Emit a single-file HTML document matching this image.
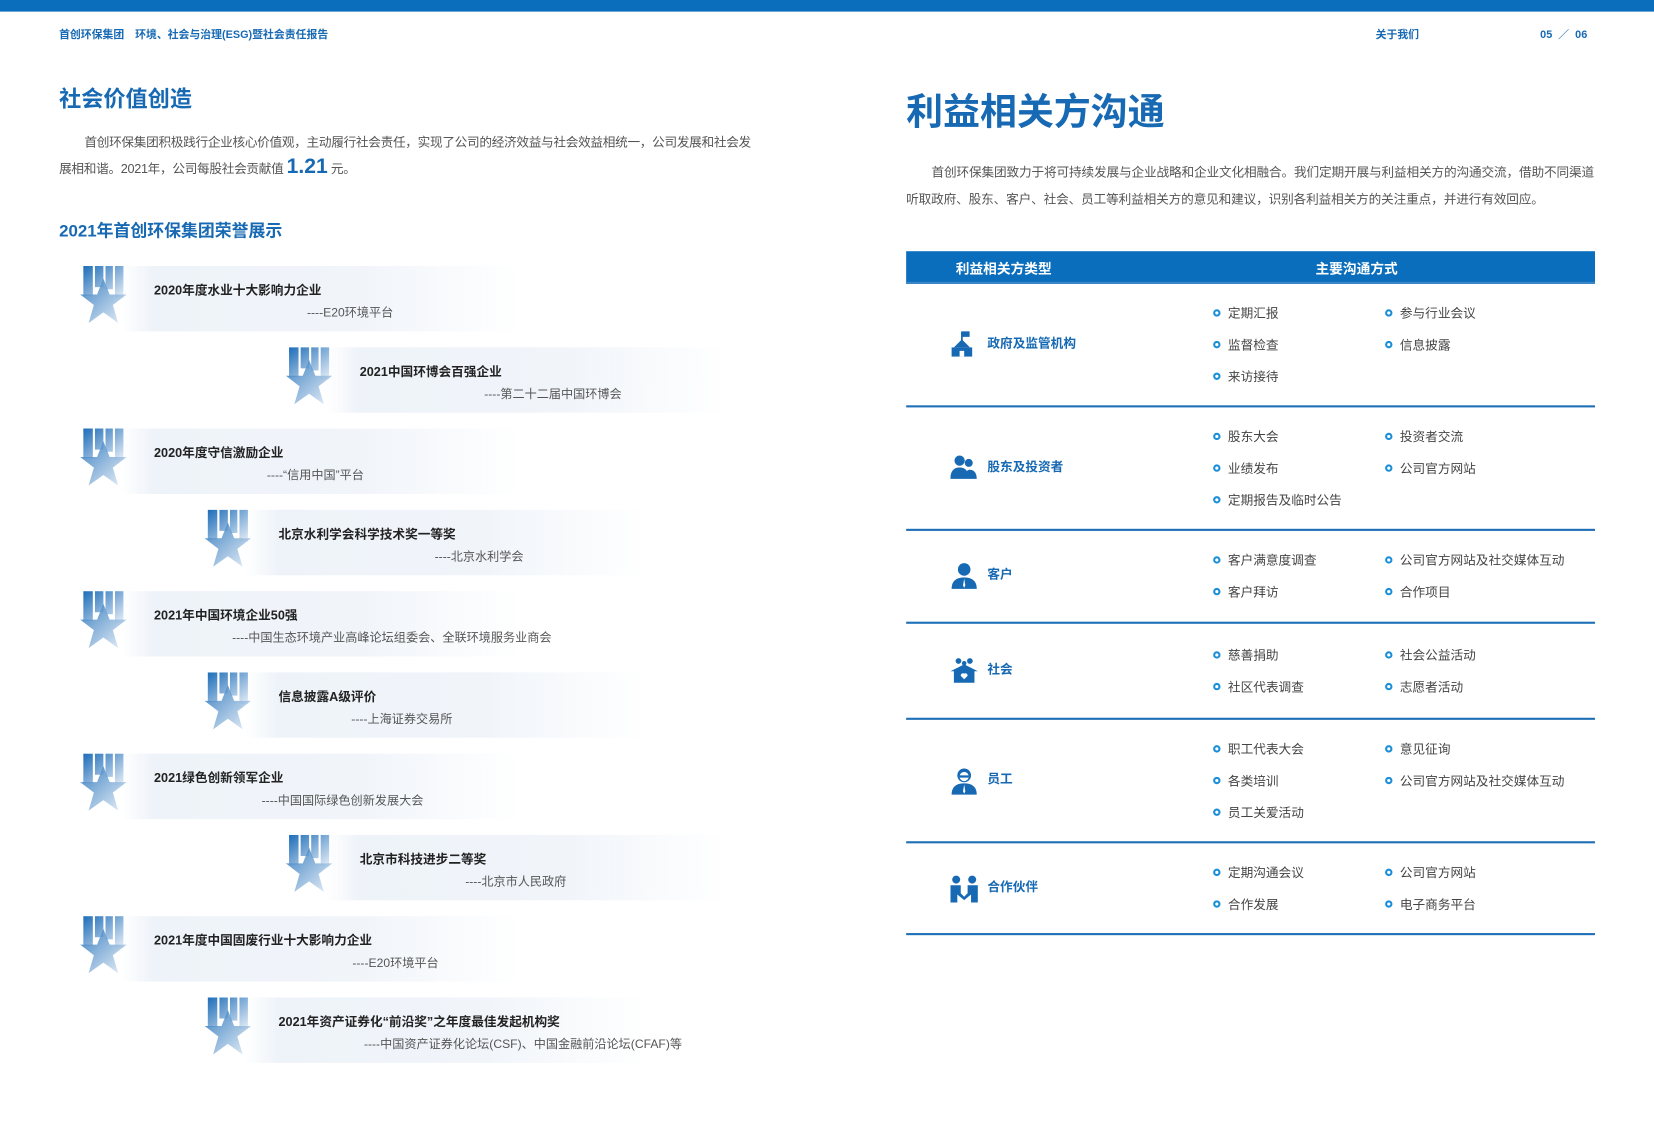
<!DOCTYPE html>
<html><head><meta charset="utf-8"><style>
*{margin:0;padding:0;box-sizing:border-box}
html,body{width:1654px;height:1122px;overflow:hidden;background:#fff}
#w{position:absolute;left:0;top:0;width:1568px;height:1063px;transform:scale(1.0549,1.0555);transform-origin:0 0;font-family:"Liberation Sans","Noto Sans CJK SC",sans-serif;color:#444}
.a{position:absolute;white-space:nowrap}
.b{color:#1769b3;font-weight:bold}
.ban{position:absolute;height:62px;width:380px;background:linear-gradient(90deg,rgba(220,230,240,.0) 0%,#eef3f9 8%,#f1f5fa 60%,rgba(255,255,255,0) 100%)}
.t{font-size:12px;font-weight:bold;color:#222}
.s{font-size:11.5px;color:#555}
.bl{position:absolute;width:7px;height:7px;border:2px solid #1a8fd8;border-radius:50%}
.it{font-size:12px;color:#444}
.ln{position:absolute;left:859px;width:653px;height:2px;background:#1e6fb5}
.lb{font-size:12px;font-weight:bold;color:#1769b3}
</style></head><body><div id="w">
<div class="a" style="left:0;top:0;width:1568px;height:11px;background:#0a6ebd"></div>
<div class="a b" style="left:56px;top:24px;font-size:10.3px">首创环保集团　环境、社会与治理(ESG)暨社会责任报告</div>
<div class="a b" style="left:1304px;top:24px;font-size:10.3px">关于我们</div>
<div class="a b" style="left:1460px;top:24px;font-size:10.3px">05 &nbsp;／&nbsp; 06</div>

<div class="a b" style="left:56px;top:78px;font-size:21px">社会价值创造</div>
<div class="a" style="left:80px;top:126px;font-size:12px;color:#555;letter-spacing:-0.3px">首创环保集团积极践行企业核心价值观，主动履行社会责任，实现了公司的经济效益与社会效益相统一，公司发展和社会发</div>
<div class="a" style="left:56px;top:147px;font-size:12px;color:#555;letter-spacing:-0.3px">展相和谐。2021年，公司每股社会贡献值 <span style="font-size:20px;font-weight:bold;color:#1769b3;letter-spacing:0">1.21</span> 元。</div>
<div class="a b" style="left:56px;top:205px;font-size:16px">2021年首创环保集团荣誉展示</div>

<div id="aw"></div>

<div class="a b" style="left:859px;top:78px;font-size:35px">利益相关方沟通</div>
<div class="a" style="left:883px;top:154px;font-size:12px;color:#555;letter-spacing:-0.15px">首创环保集团致力于将可持续发展与企业战略和企业文化相融合。我们定期开展与利益相关方的沟通交流，借助不同渠道</div>
<div class="a" style="left:859px;top:180px;font-size:12px;color:#555;letter-spacing:-0.15px">听取政府、股东、客户、社会、员工等利益相关方的意见和建议，识别各利益相关方的关注重点，并进行有效回应。</div>

<div class="a" style="left:859px;top:238px;width:653px;height:31px;background:#0a6ebd;border-bottom:2px solid #3a86c6"></div>
<div class="a" style="left:906px;top:244px;font-size:13px;font-weight:bold;color:#fff">利益相关方类型</div>
<div class="a" style="left:1247px;top:244px;font-size:13px;font-weight:bold;color:#fff">主要沟通方式</div>
<div id="tb"></div>
</div>
<script>
var aw=[[75,"2020年度水业十大影响力企业",291,"----E20环境平台"],[270,"2021中国环博会百强企业",459,"----第二十二届中国环博会"],[75,"2020年度守信激励企业",253,"----“信用中国”平台"],[193,"北京水利学会科学技术奖一等奖",412,"----北京水利学会"],[75,"2021年中国环境企业50强",220,"----中国生态环境产业高峰论坛组委会、全联环境服务业商会"],[193,"信息披露A级评价",333,"----上海证券交易所"],[75,"2021绿色创新领军企业",248,"----中国国际绿色创新发展大会"],[270,"北京市科技进步二等奖",441,"----北京市人民政府"],[75,"2021年度中国固废行业十大影响力企业",334,"----E20环境平台"],[193,"2021年资产证券化“前沿奖”之年度最佳发起机构奖",345,"----中国资产证券化论坛(CSF)、中国金融前沿论坛(CFAF)等"]];
var h="";
aw.forEach(function(r,i){var y=252+i*77,x=r[0];
h+='<div class="ban" style="left:'+(x+40)+'px;top:'+y+'px"></div>';
h+='<svg class="a" style="left:'+x+'px;top:'+y+'px" width="46" height="55" viewBox="0 0 46 55"><defs><linearGradient id="g'+i+'" x1="0" y1="0" x2="1" y2="1"><stop offset="0" stop-color="#1d6db8"/><stop offset="1" stop-color="#e6eef7"/></linearGradient></defs><path d="M4 0h9v28h-9zM15 0h8v20h-8zM25 0h7v22h-7zM34 0h8v30h-8z" fill="url(#g'+i+')"/><path d="M23 12l6 15h16l-13 10 5 17-14-10-14 10 5-17-13-10h16z" fill="url(#g'+i+')" opacity=".85"/></svg>';
h+='<div class="a t" style="left:'+(x+71)+'px;top:'+(y+14)+'px">'+r[1]+'</div>';
h+='<div class="a s" style="left:'+r[2]+'px;top:'+(y+36)+'px">'+r[3]+'</div>';});
document.getElementById("aw").outerHTML=h;
var ic={
gov:'<path d="M10 0v8M10 0h6v4h-6" stroke="#1769b3" stroke-width="1.5" fill="#1769b3"/><path d="M10 7l7 7h-14z" fill="#1769b3"/><rect x="1" y="14" width="18" height="8" fill="#1769b3"/><rect x="8" y="17" width="4" height="5" fill="#fff"/>',
sh:'<circle cx="8" cy="5" r="4.5" fill="#1769b3"/><circle cx="16" cy="7" r="3.5" fill="#1769b3"/><path d="M0 21c0-7 3-10 8-10s8 3 8 10zM13 21c0-5 1-8 4-8s6 2 6 8z" fill="#1769b3"/>',
cu:'<circle cx="12" cy="6" r="5.5" fill="#1769b3"/><path d="M1 23c0-7 4-10 11-10s11 3 11 10z" fill="#1769b3"/><path d="M12 14l1 6-1 2-1-2z" fill="#fff"/>',
so:'<circle cx="7" cy="3" r="2.5" fill="#1769b3"/><circle cx="17" cy="3" r="2.5" fill="#1769b3"/><circle cx="12" cy="5" r="2" fill="#1769b3"/><path d="M0 12l12-6 12 6h-3v10h-18v-10z" fill="#1769b3"/><path d="M12 19l-3-3a2 2 0 013-2 2 2 0 013 2z" fill="#fff"/>',
em:'<circle cx="12" cy="7" r="6" fill="#1769b3"/><circle cx="12" cy="8" r="4" fill="#fff"/><rect x="8" y="7" width="8" height="2" fill="#1769b3"/><path d="M1 24c0-7 4-10 11-10s11 3 11 10z" fill="#1769b3"/><path d="M12 15l1 6-1 2-1-2z" fill="#fff"/>',
pa:'<circle cx="5" cy="4" r="3.5" fill="#1769b3"/><circle cx="19" cy="4" r="3.5" fill="#1769b3"/><path d="M0 9h9v7l3 3 3-3v-7h9v15h-6v-7l-6 5-6-5v7h-6z" fill="#1769b3"/>'};
var rows=[[269,385,"gov","政府及监管机构",[["定期汇报","参与行业会议"],["监督检查","信息披露"],["来访接待",""]]],
[385,502,"sh","股东及投资者",[["股东大会","投资者交流"],["业绩发布","公司官方网站"],["定期报告及临时公告",""]]],
[502,590,"cu","客户",[["客户满意度调查","公司官方网站及社交媒体互动"],["客户拜访","合作项目"]]],
[590,681,"so","社会",[["慈善捐助","社会公益活动"],["社区代表调查","志愿者活动"]]],
[681,798,"em","员工",[["职工代表大会","意见征询"],["各类培训","公司官方网站及社交媒体互动"],["员工关爱活动",""]]],
[798,885,"pa","合作伙伴",[["定期沟通会议","公司官方网站"],["合作发展","电子商务平台"]]]];
h="";
rows.forEach(function(r){var m=(r[0]+r[1])/2,n=r[4].length,y0=m-(n-1)*15-1;
h+='<svg class="a" style="left:901px;top:'+(m-13)+'px" width="26" height="26" viewBox="0 0 24 24">'+ic[r[2]]+'</svg>';
h+='<div class="a lb" style="left:936px;top:'+(m-11)+'px">'+r[3]+'</div>';
r[4].forEach(function(p,k){var y=y0+k*30;
[[1150,p[0]],[1313,p[1]]].forEach(function(c){if(!c[1])return;
h+='<div class="bl" style="left:'+c[0]+'px;top:'+(y-3)+'px"></div><div class="a it" style="left:'+(c[0]+14)+'px;top:'+(y-8)+'px">'+c[1]+'</div>';});});
h+='<div class="ln" style="top:'+(r[1]-1)+'px"></div>';});
document.getElementById("tb").outerHTML=h;
</script>
</body></html>
